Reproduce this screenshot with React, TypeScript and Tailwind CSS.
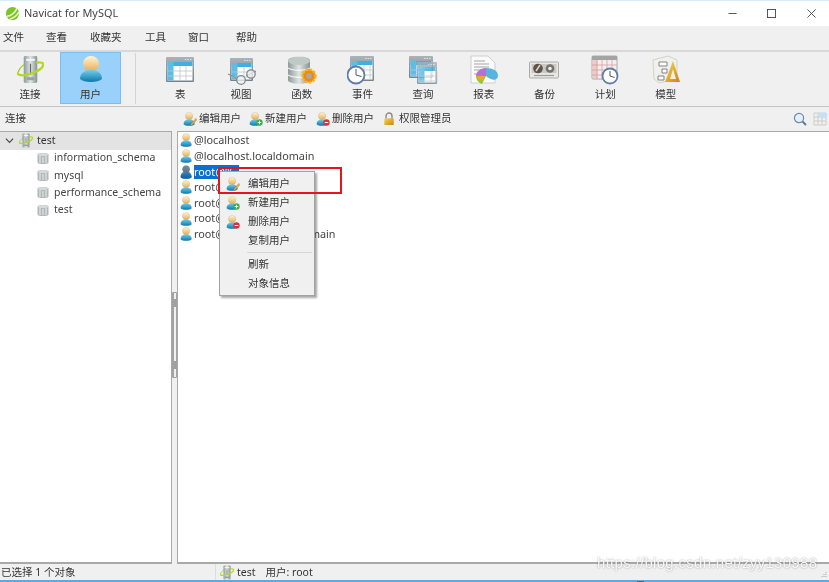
const cjk = "font-['Noto_Sans','Noto_Sans_CJK_SC',sans-serif]";

function Defs() {
    return <svg className="absolute w-0 h-0">
        <defs>
            <linearGradient id="head" x1="0" y1="0" x2="0" y2="1">
                <stop offset="0" stopColor="#fff6d8" />
                <stop offset="1" stopColor="#e9a94f" />
            </linearGradient>
            <linearGradient id="body" x1="0" y1="0" x2="0" y2="1">
                <stop offset="0" stopColor="#74cde8" />
                <stop offset="1" stopColor="#0b78ad" />
            </linearGradient>
            <linearGradient id="steel" x1="0" y1="0" x2="1" y2="0">
                <stop offset="0" stopColor="#8e9a98" />
                <stop offset="0.5" stopColor="#dfe6e4" />
                <stop offset="1" stopColor="#87918f" />
            </linearGradient>
            <linearGradient id="win" x1="0" y1="0" x2="0" y2="1">
                <stop offset="0" stopColor="#a9b3b8" />
                <stop offset="1" stopColor="#76828a" />
            </linearGradient>
            <linearGradient id="gold" x1="0" y1="0" x2="1" y2="1">
                <stop offset="0" stopColor="#f7d65e" />
                <stop offset="1" stopColor="#c8860f" />
            </linearGradient>
        </defs>
    </svg>
}

function Person({ badge, selected }: { badge?: "pen" | "add" | "del", selected?: boolean }) {
    return <svg viewBox="0 0 24 24" className="w-[14px] h-[14px] shrink-0">
        <circle cx="10.5" cy="7" r="6.3" fill="url(#head)" stroke="#c79a55" strokeWidth="0.5" />
        <path d="M1 21C1 15 6 12.5 10.5 12.5S20 15 20 21C17 24.5 4 24.5 1 21Z" fill="url(#body)" />
        {selected && <path d="M10.5 0.7A6.3 6.3 0 0 1 15 11.5C18 13 20 16 20 21C17 24.5 4 24.5 1 21C1 16 3 13 6 11.5A6.3 6.3 0 0 1 10.5 0.7Z" fill="#0a4f96" fillOpacity="0.6" />}
        {badge === "pen" && <path d="M13 21L22 11L24 13L15 23Z" fill="#e8b23a" stroke="#b0563c" strokeWidth="0.7" />}
        {badge === "add" && <><circle cx="18" cy="18" r="5.5" fill="#3dae4a" /><path d="M15 18H21M18 15V21" stroke="#fff" strokeWidth="1.6" /></>}
        {badge === "del" && <><circle cx="18" cy="18" r="5.5" fill="#d8323c" /><path d="M15 18H21" stroke="#fff" strokeWidth="1.8" /></>}
    </svg>
}

function Lock() {
    return <svg viewBox="0 0 14 16" className="w-[12px] h-[14px] shrink-0">
        <path d="M3.5 8V4.5a3.5 3.5 0 0 1 7 0V8" fill="none" stroke="#8b8b80" strokeWidth="1.6" />
        <rect x="1.5" y="7" width="11" height="8" rx="1" fill="url(#gold)" />
    </svg>
}

function Conn({ small }: { small?: boolean }) {
    return <svg viewBox="0 0 28 30" className={small ? "w-[14px] h-[15px] shrink-0" : "w-[27px] h-[29px] shrink-0"}>
        <path d="M1 18C3 12 9 8 15 7" fill="none" stroke="#a8cf20" strokeWidth="1.6" />
        <rect x="7" y="1" width="14" height="28" rx="1.5" fill="url(#steel)" />
        <rect x="9.5" y="4" width="9" height="2" fill="#f4f6f5" />
        <rect x="10" y="23" width="8" height="3" fill="#9aa3a1" />
        <path d="M14 9V20" stroke="#666" strokeWidth="1.2" />
        <path d="M20 8C25 7 28 8 27 11C26 15 16 20 7 21C2 21 0 20 1 18" fill="none" stroke="#b2d81f" strokeWidth="2.4" />
    </svg>
}

function Db() {
    return <svg viewBox="0 0 12 13" className="w-[12px] h-[13px] shrink-0">
        <path d="M0.5 2.5C0.5 0.5 11.5 0.5 11.5 2.5V10.5C11.5 12.5 0.5 12.5 0.5 10.5Z" fill="#b3b7b8" />
        <path d="M3 4V11M6 5V11M9 4V11" stroke="#eceeee" strokeWidth="1" />
        <ellipse cx="6" cy="2.5" rx="5" ry="1.5" fill="#d7dada" />
    </svg>
}

function Grid({ x, y, w, h }: { x: number, y: number, w: number, h: number }) {
    return <g>
        <rect x={x} y={y} width={w} height={h} rx="1" fill="url(#win)" />
        <path d={`M${x + w - 9} ${y + 2.5}H${x + w - 2}`} stroke="#dfe3e5" strokeWidth="1" strokeDasharray="1.5 1" />
        <rect x={x + 1.5} y={y + 5} width={w - 3} height={h - 6.5} fill="#fff" />
        <rect x={x + 1.5} y={y + 5} width={w - 3} height="4" fill="#3fb0e0" />
        <rect x={x + 1.5} y={y + 5} width="6" height={h - 6.5} fill="#5fbce4" />
        <path d={`M${x + 14} ${y + 9}V${y + h - 1.5}M${x + 20} ${y + 9}V${y + h - 1.5}M${x + 1.5} ${y + 14}H${x + w - 1.5}M${x + 1.5} ${y + 19}H${x + w - 1.5}`} stroke="#b9c6cc" strokeWidth="0.8" />
    </g>
}

function Clock({ cx, cy, r }: { cx: number, cy: number, r: number }) {
    return <g>
        <circle cx={cx} cy={cy} r={r} fill="#fff" stroke="#5e7da8" strokeWidth="1.8" />
        <path d={`M${cx} ${cy - r + 2.5}V${cy}L${cx + r - 3} ${cy + 1.5}`} fill="none" stroke="#444" strokeWidth="0.9" />
    </g>
}

function ToolIcon({ name }: { name: string }) {
    return <svg viewBox="0 0 30 30" className="w-[30px] h-[30px]">
        {name === "table" && <Grid x={1} y={2} w={28} h={25} />}
        {name === "view" && <>
            <Grid x={4} y={3} w={23} h={23} />
            <path d="M2 19L10 23M20 21L30 16" fill="none" stroke="#8a9597" strokeWidth="1.2" />
            <circle cx="15" cy="25" r="4.3" fill="#eef2f3" fillOpacity="0.75" stroke="#7f8a8c" strokeWidth="1.3" />
            <circle cx="25" cy="19" r="4.2" fill="#eef2f3" fillOpacity="0.75" stroke="#7f8a8c" strokeWidth="1.3" />
        </>}
        {name === "func" && <>
            <path d="M1 6C1 0 23 0 23 6V25C23 30 1 30 1 25Z" fill="url(#steel)" />
            <ellipse cx="12" cy="6" rx="11" ry="4" fill="#bfc9c6" />
            <path d="M1 13C5 16 19 16 23 13M1 20C5 23 19 23 23 20" fill="none" stroke="#fff" strokeWidth="1" />
            <circle cx="22" cy="21" r="6.5" fill="#ee8a12" stroke="#f7b526" strokeWidth="2.4" strokeDasharray="2.5 1.3" />
            <circle cx="22" cy="21" r="3" fill="#a9a9a0" />
        </>}
        {name === "event" && <>
            <Grid x={3} y={1} w={24} h={25} />
            <Clock cx={9} cy={20} r={8.5} />
        </>}
        {name === "query" && <>
            <Grid x={1} y={1} w={24} h={22} />
            <g opacity="0.8"><Grid x={9} y={7} w={20} h={22} /></g>
        </>}
        {name === "report" && <>
            <path d="M2 1H19L26 8V28H2Z" fill="#fafafa" stroke="#c4c4c4" strokeWidth="0.8" />
            <path d="M5 6H16M5 9H20M5 12H20M5 15H12M5 19H9" stroke="#a5a5a5" strokeWidth="1" />
            <path d="M17 21V13C11 13 7 17 7 21Z" fill="#b56fd9" />
            <path d="M17 13C24 13 29 16 29 20.5S24 27 17 21Z" fill="#56b4de" />
            <path d="M7 21H17L13 29C10 28 7 25 7 21Z" fill="#9ac52c" />
            <path d="M8 21H16L14 25H10Z" fill="#f0a532" />
        </>}
        {name === "backup" && <>
            <rect x="0.5" y="7" width="29" height="16" rx="1" fill="#e8e8e6" stroke="#9c9c98" strokeWidth="0.8" />
            <rect x="2.5" y="9" width="25" height="9" fill="#c9c9c5" />
            <circle cx="9" cy="13.5" r="4.8" fill="#5f5348" />
            <circle cx="21" cy="13.5" r="4.3" fill="#7a7068" />
            <path d="M7 16L11 10" stroke="#d8d4ce" strokeWidth="1.5" />
            <circle cx="21" cy="13.5" r="1.8" fill="#eee" />
            <path d="M5 20.5H25" stroke="#9a9a96" strokeWidth="1.2" />
        </>}
        {name === "schedule" && <>
            <rect x="2" y="1" width="25" height="23" rx="1" fill="#f4eeee" stroke="#9a9a9a" strokeWidth="0.8" />
            <rect x="2" y="1" width="25" height="4" fill="#a4a4a4" />
            <rect x="2.5" y="5" width="5" height="18" fill="#f2c9c9" />
            <path d="M7 5V24M12 5V24M17 5V24M22 5V24M2 10H27M2 15H27M2 20H27" stroke="#d49a9a" strokeWidth="0.7" />
            <Clock cx={20} cy={21} r={7.5} />
        </>}
        {name === "model" && <>
            <path d="M2 5L17 1L26 5V24L8 28L3 24Z" fill="#f0f0ec" stroke="#c9c9c4" strokeWidth="0.8" />
            <path d="M8 7H16V11H8ZM11 14H16V18H11ZM7 21H13V25H7Z" fill="#fff" stroke="#777" strokeWidth="0.9" />
            <path d="M22 6L29 27H14Z" fill="url(#gold)" />
            <path d="M22 14L25 24H19Z" fill="#f2efe4" />
        </>}
    </svg>
}

function ToolButton({ label, name }: { label: string, name: string }) {
    return <div className="w-[60.7px] flex flex-col items-center pt-[2px]">
        <div className="h-[31px] flex items-center justify-center"><ToolIcon name={name} /></div>
        <span className="leading-[14px] mt-[2px]">{label}</span>
    </div>
}

function SubAction({ icon, label, className }: { icon: React.ReactNode, label: string, className: string }) {
    return <div className={`flex items-center gap-[2px] ${className}`}>
        {icon}
        <span>{label}</span>
    </div>
}

function MenuRow({ icon, label }: { icon?: React.ReactNode, label: string }) {
    return <div className="h-[19px] flex items-center">
        <div className="w-[28px] pl-[6px]">{icon}</div>
        <span>{label}</span>
    </div>
}

const users = ["@localhost", "@localhost.localdomain", "root@%", "root@127.0.0.1", "root@::1", "root@localhost", "root@localhost.localdomain"];
const dbs = ["information_schema", "mysql", "performance_schema", "test"];
const menu = ["文件", "查看", "收藏夹", "工具", "窗口", "帮助"];
const menuGaps = ["ml-[3px]", "ml-[22px]", "ml-[23px]", "ml-[23.5px]", "ml-[22px]", "ml-[27px]"];

export default function App() {
    return <div className={`relative w-[829px] h-[582px] overflow-hidden bg-[#f0f0f0] text-[#333] text-[10.5px] blur-[0.3px] ${cjk}`}>
        <Defs />
        <div className="h-[1px] bg-[#d9ecfa]"></div>

        <div className="h-[25px] bg-white flex items-center pl-[5px]">
            <svg viewBox="0 0 16 16" className="w-[15px] h-[15px]">
                <circle cx="8" cy="8" r="7" fill="#7cc42a" />
                <path d="M2 11C6 11 11 7 13 2M5 14C9 13 13 10 15 6" fill="none" stroke="#e9f6c8" strokeWidth="1.6" />
            </svg>
            <span className="ml-[4px] text-[10.9px] text-[#444] -mt-[1px]">Navicat for MySQL</span>
            <div className="ml-auto flex items-center text-[#333]">
                <svg viewBox="0 0 10 10" className="w-[9px] h-[9px] mr-[30px]"><path d="M0.5 5H9.5" stroke="#444" /></svg>
                <svg viewBox="0 0 10 10" className="w-[9px] h-[9px] mr-[31px]"><rect x="0.5" y="0.5" width="9" height="9" fill="none" stroke="#444" /></svg>
                <svg viewBox="0 0 10 10" className="w-[9px] h-[9px] mr-[13px]"><path d="M0.5 0.5L9.5 9.5M9.5 0.5L0.5 9.5" stroke="#444" /></svg>
            </div>
        </div>

        <div className="h-[24px] flex items-center">
            {menu.map((m, i) => <span key={m} className={menuGaps[i]}>{m}</span>)}
        </div>

        <div className="h-[57px] border-t-2 border-t-[#d8d8d8] border-b border-b-[#c4c4c4] flex items-start">
            <div className="w-[60px] flex flex-col items-center pt-[2px]">
                <div className="h-[31px] flex items-center"><Conn /></div>
                <span className="leading-[14px] mt-[2px]">连接</span>
            </div>
            <div className="w-[61px] h-[52px] bg-[#99d1fb] border border-[#7cbdf0] flex flex-col items-center">
                <div className="h-[31px] flex items-center">
                    <svg viewBox="0 0 24 28" className="w-[24px] h-[28px]">
                        <circle cx="12" cy="9" r="8" fill="url(#head)" />
                        <path d="M1 24C1 17 7 15 12 15S23 17 23 24C19 28 5 28 1 24Z" fill="url(#body)" />
                    </svg>
                </div>
                <span className="leading-[14px] mt-[3px]">用户</span>
            </div>
            <div className="w-[1px] h-[51px] bg-[#d4d4d4] ml-[14px] mr-[14px] mt-[1px]"></div>
            <ToolButton label="表" name="table" />
            <ToolButton label="视图" name="view" />
            <ToolButton label="函数" name="func" />
            <ToolButton label="事件" name="event" />
            <ToolButton label="查询" name="query" />
            <ToolButton label="报表" name="report" />
            <ToolButton label="备份" name="backup" />
            <ToolButton label="计划" name="schedule" />
            <ToolButton label="模型" name="model" />
        </div>

        <div className="h-[24px] flex items-center">
            <span className="w-[183px] pl-[5px]">连接</span>
            <SubAction icon={<Person badge="pen" />} label="编辑用户" className="mr-[8px]" />
            <SubAction icon={<Person badge="add" />} label="新建用户" className="mr-[9px]" />
            <SubAction icon={<Person badge="del" />} label="删除用户" className="mr-[9px]" />
            <SubAction icon={<Lock />} label="权限管理员" className="gap-[4px]" />
            <div className="ml-auto flex items-center gap-[6px] pr-[2px]">
                <svg viewBox="0 0 14 14" className="w-[14px] h-[14px]">
                    <circle cx="6" cy="6" r="4.6" fill="#e3f0f8" stroke="#6d8ba8" strokeWidth="1.2" />
                    <path d="M9.5 9.5L13 13" stroke="#5f7690" strokeWidth="1.8" />
                </svg>
                <svg viewBox="0 0 14 14" className="w-[14px] h-[14px]">
                    <path d="M1 1V13M5 1V13M9 1V13M13 1V13M1 1H13M1 5H13M1 9H13M1 13H13" stroke="#c4c4c4" strokeWidth="0.8" />
                    <rect x="6" y="1" width="8" height="4" fill="#bfe3fa" />
                </svg>
            </div>
        </div>

        <div className="h-[433px] flex">
            <div className="w-[172px] bg-white border border-[#a9a9a9] border-l-0 border-b-2">
                <div className="h-[17.5px] bg-[#e3e3e3] flex items-center pl-[5px]">
                    <svg viewBox="0 0 10 10" className="w-[9px] h-[9px]"><path d="M1 3L5 7L9 3" fill="none" stroke="#444" strokeWidth="1.3" /></svg>
                    <div className="ml-[5px] mr-[4px]"><Conn small /></div>
                    <span>test</span>
                </div>
                {dbs.map(d => <div key={d} className="h-[17.4px] flex items-center pl-[37px] gap-[5px] text-[#444]">
                    <Db />
                    <span className="text-[10.5px]">{d}</span>
                </div>)}
            </div>

            <div className="w-[5px] relative">
                <div className="absolute left-0 top-[161px] w-[5px] h-[86px] border border-[#a2a2a2] border-l-2 rounded-[1px]">
                    <div className="mt-[6px] w-[3px] h-[8px] bg-[#a0a0a0]"></div>
                    <div className="mt-[54px] w-[3px] h-[8px] bg-[#a0a0a0]"></div>
                </div>
            </div>

            <div className="flex-1 bg-white border border-[#a9a9a9] border-r-0 border-b-2 pt-[0.5px]">
                {users.map((u, i) => <div key={u} className="h-[15.65px] flex items-center pl-[2px] text-[#444]">
                    <Person selected={i === 2} />
                    <span className={`text-[10.8px] ${i === 2 ? "bg-[#0a6fd0] text-white w-[45px] leading-[14px]" : ""}`}>{u}</span>
                </div>)}
            </div>
        </div>

        <div className="h-[16px] flex items-center">
            <span className="w-[215px] pl-[1px] pt-[2px]">已选择 1 个对象</span>
            <div className="h-[16px] pl-[4px] pt-[1px] border-l border-l-[#dcdcdc] flex items-center"><Conn small /></div>
            <span className="ml-[3px] pt-[2px]">test</span>
            <span className="ml-[10px] pt-[2px]">用户: root</span>
            <div className="ml-auto mr-[1px] mt-[6px]">
                <svg viewBox="0 0 8 8" className="w-[8px] h-[8px]"><path d="M6 1V2M4 3V4M6 3V4M2 5V6M4 5V6M6 5V6" stroke="#a5a5a5" /></svg>
            </div>
        </div>
        <div className="h-[2px] bg-[#5ea9e2]"></div>

        <div className="absolute left-[219px] top-[171px] w-[96px] h-[125px] bg-[#f0f0f0] border border-[#a3a3a3] shadow-[2px_2px_2px_rgba(0,0,0,0.35)] pt-[2px]">
            <MenuRow icon={<Person badge="pen" />} label="编辑用户" />
            <MenuRow icon={<Person badge="add" />} label="新建用户" />
            <MenuRow icon={<Person badge="del" />} label="删除用户" />
            <MenuRow label="复制用户" />
            <div className="h-[1px] bg-[#d6d6d6] ml-[27px] mr-[2px] my-[2px]"></div>
            <MenuRow label="刷新" />
            <MenuRow label="对象信息" />
        </div>
        <div className="absolute left-[218px] top-[167px] w-[124px] h-[27px] border-2 border-[#e5141f]"></div>

        <div className="absolute left-[597px] top-[554px] text-[15px] leading-[18px] text-white/90 tracking-[0.3px] [text-shadow:0_0_2px_rgba(0,0,0,0.4)] font-['Liberation_Sans',sans-serif]">https://blog.csdn.net/zyy130988</div>
        <div className="absolute left-[637px] top-[581px] w-[7px] h-[1px] bg-[#5a6b78]"></div>
    </div>
}
